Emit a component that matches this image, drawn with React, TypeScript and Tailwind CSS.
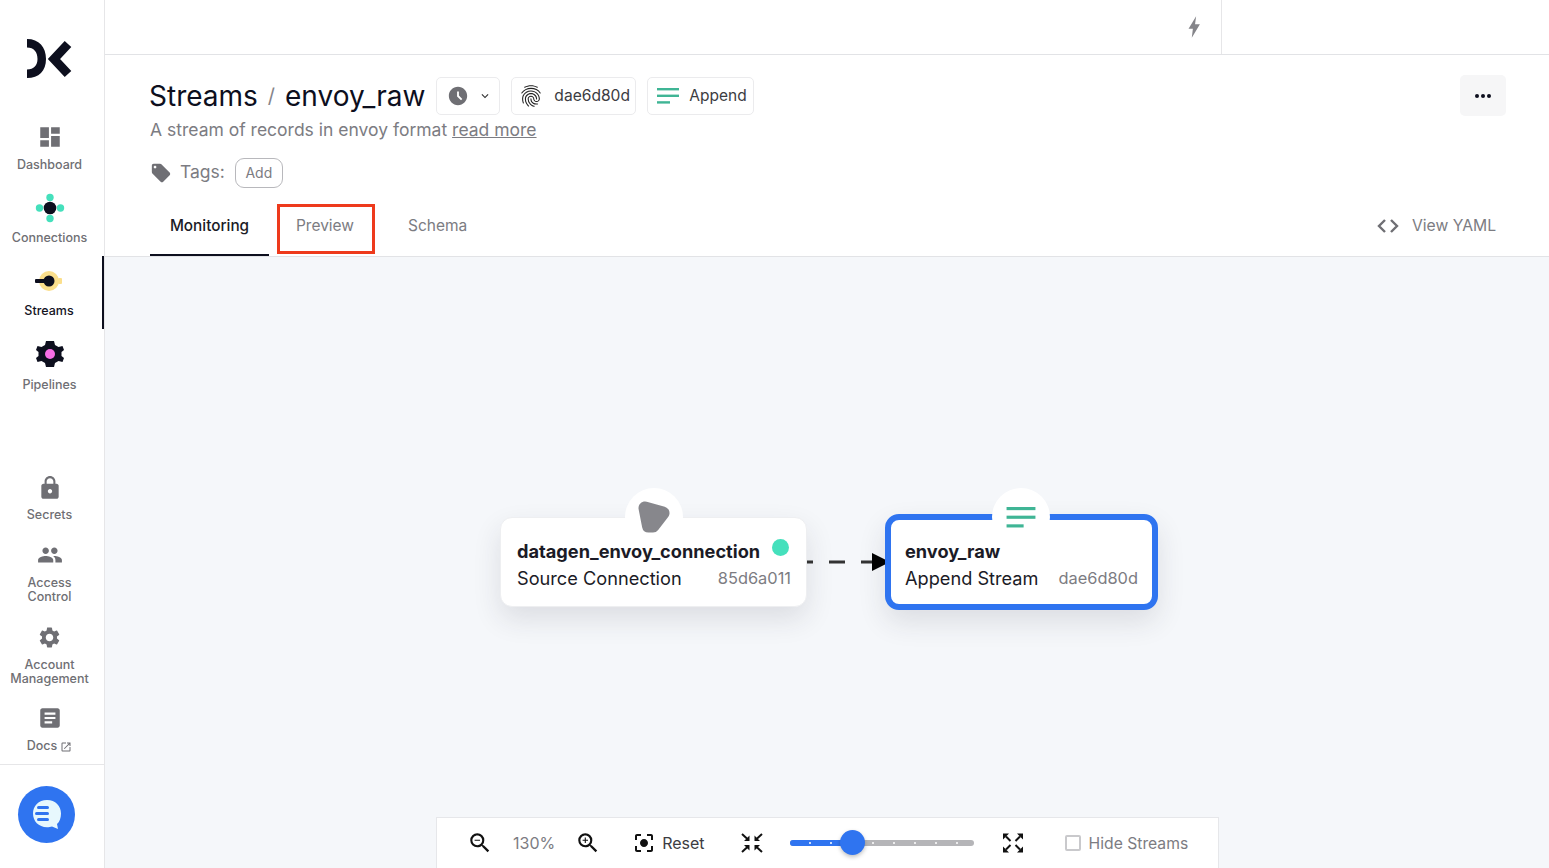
import {
  MdAccessTimeFilled,
  MdArticle,
  MdCenterFocusStrong,
  MdDashboard,
  MdFingerprint,
  MdKeyboardArrowDown,
  MdLocalOffer,
  MdLock,
  MdOpenInNew,
  MdPeople,
  MdSettings,
  MdZoomIn,
  MdZoomOut,
} from "react-icons/md";

const Logo = () => (
  <svg width="46" height="40" viewBox="0 0 46 40" fill="none">
    <path d="M0 0 C12 0 19 8 19 20 C19 32 12 39 0 39 L0 30.5 C7 30.5 10.5 26 10.5 20 C10.5 13 7 8.5 0 8.5 Z" fill="#0d0f1e" />
    <path d="M41 5 L27 20 L41 35" stroke="#0d0f1e" strokeWidth="9" />
  </svg>
);

const ConnectionsIcon = () => (
  <svg width="30" height="30" viewBox="0 0 30 30">
    <circle cx="15" cy="4.5" r="3.7" fill="#45e0bc" />
    <circle cx="15" cy="25.5" r="3.7" fill="#45e0bc" />
    <circle cx="4.5" cy="15" r="3.7" fill="#45e0bc" />
    <circle cx="25.5" cy="15" r="3.7" fill="#45e0bc" />
    <circle cx="15" cy="15" r="6.3" fill="#0d0f1e" />
  </svg>
);

const StreamsIcon = () => (
  <svg width="30" height="24" viewBox="0 0 30 24">
    <circle cx="15" cy="12" r="10" fill="#fbdf8c" />
    <rect x="24" y="9" width="4" height="6" rx="1" fill="#fbdf8c" />
    <rect x="1" y="10" width="14" height="4" rx="1" fill="#0d0f1e" />
    <circle cx="15" cy="12" r="5.5" fill="#0d0f1e" />
  </svg>
);

const PipelinesIcon = () => (
  <svg width="30" height="30" viewBox="0 0 30 30">
    <path
      d="M11 2 h8 l1 4 l3.5 2 l4 -1 l1.5 4 l-2.5 2 v4 l2.5 2 l-1.5 4 l-4 -1 l-3.5 2 l-1 4 h-8 l-1 -4 l-3.5 -2 l-4 1 l-1.5 -4 l2.5 -2 v-4 l-2.5 -2 l1.5 -4 l4 1 l3.5 -2 Z"
      fill="#0d0f1e"
    />
    <circle cx="15" cy="15" r="5" fill="#f76ee6" />
  </svg>
);

const StreamLines = ({ w = 22, h = 16 }: { w?: number; h?: number }) => (
  <svg width={w} height={h} viewBox="0 0 22 16">
    <rect x="0" y="0" width="22" height="2.4" fill="#3fb595" />
    <rect x="0" y="6.6" width="22" height="2.4" fill="#3fb595" />
    <rect x="0" y="13.2" width="13" height="2.4" fill="#3fb595" />
  </svg>
);

const Bolt = () => (
  <svg width="13" height="22" viewBox="0 0 12 20">
    <path d="M7.5 0 L0.5 11.5 H4.5 L3.5 20 L11 7.5 H6.5 Z" fill="#85858a" />
  </svg>
);

const ArrowsIn = () => (
  <svg width="22" height="20" viewBox="0 0 22 20" fill="#111">
    <path d="M1 1 L7 6.5 M21 1 L15 6.5 M1 19 L7 13.5 M21 19 L15 13.5" stroke="#111" strokeWidth="2" />
    <path d="M8.5 8 V2.5 L3 8 Z M13.5 8 V2.5 L19 8 Z M8.5 12 V17.5 L3 12 Z M13.5 12 V17.5 L19 12 Z" />
  </svg>
);

const ArrowsOut = () => (
  <svg width="22" height="20" viewBox="0 0 22 20" fill="#111">
    <path d="M4 3.5 L8.5 8 M18 3.5 L13.5 8 M4 16.5 L8.5 12 M18 16.5 L13.5 12" stroke="#111" strokeWidth="2" />
    <path d="M1 0.5 H7 L1 6.5 Z M21 0.5 H15 L21 6.5 Z M1 19.5 H7 L1 13.5 Z M21 19.5 H15 L21 13.5 Z" />
  </svg>
);

const NavItem = ({
  label,
  icon,
  active,
  className,
}: {
  label: React.ReactNode;
  icon: React.ReactNode;
  active?: boolean;
  className: string;
}) => (
  <div className={`relative flex flex-col items-center text-center text-[12.5px] leading-[14px] font-medium ${active ? "text-[#14141f]" : "text-[#6f6f74]"} ${className}`}>
    {icon}
    {label}
    {active && <div className="absolute top-0 right-0 bottom-0 w-[2px] bg-[#0d0f1e]" />}
  </div>
);

const Sidebar = () => (
  <aside className="flex w-[105px] shrink-0 flex-col border-r border-[#e6e6e8] bg-white">
    <div className="flex h-[110px] items-start justify-center pt-[39px] pr-[4px]">
      <Logo />
    </div>
    <NavItem className="h-[73px] pt-[14px] gap-[8px] pr-[5px]" label="Dashboard" icon={<MdDashboard size={26} className="text-[#6f6f74]" />} />
    <NavItem className="h-[73px] pt-[10px] gap-[8px] pr-[5px]" label="Connections" icon={<ConnectionsIcon />} />
    <NavItem active className="h-[73px] pt-[13px] gap-[11px] pr-[6px]" label="Streams" icon={<StreamsIcon />} />
    <NavItem className="h-[73px] pt-[10px] gap-[9px] pr-[5px]" label="Pipelines" icon={<PipelinesIcon />} />
    <div className="flex flex-1 flex-col justify-end">
      <NavItem className="h-[68px] pt-[6px] gap-[7px] pr-[5px]" label="Secrets" icon={<MdLock size={26} className="text-[#6f6f74]" />} />
      <NavItem className="h-[83px] pt-[5px] gap-[8px] pr-[5px]" label={<>Access<br />Control</>} icon={<MdPeople size={26} className="text-[#6f6f74]" />} />
      <NavItem className="h-[82px] pt-[5px] gap-[8px] pr-[5px]" label={<>Account<br />Management</>} icon={<MdSettings size={25} className="text-[#6f6f74]" />} />
      <NavItem
        className="h-[62px] pt-[3px] gap-[8px] pr-[5px]"
        label={<span className="flex items-center gap-[3px]">Docs <MdOpenInNew size={12} className="mt-[2px]" /></span>}
        icon={<MdArticle size={26} className="text-[#6f6f74]" />}
      />
    </div>
    <div className="flex h-[104px] items-start border-t border-[#e6e6e8] pt-[21px] pl-[18px]">
      <div className="flex h-[57px] w-[57px] items-center justify-center rounded-full bg-[#2f74f0]">
        <svg width="30" height="34" viewBox="0 0 30 32">
          <path d="M15 1 C23.5 1 29 7 29 14.5 C29 19 27.5 23 25 25 L26 30 L20 27.5 C18.5 28 17 28.2 15 28.2 C6.5 28.2 1 22 1 14.5 C1 7 6.5 1 15 1 Z" fill="#e7f8fd" />
          <rect x="5" y="7" width="12" height="3" rx="1.5" fill="#2f74f0" />
          <rect x="3" y="13" width="14" height="3" rx="1.5" fill="#2f74f0" />
          <rect x="5" y="19" width="12" height="3" rx="1.5" fill="#2f74f0" />
        </svg>
      </div>
    </div>
  </aside>
);

const Chip = ({ children, className }: { children: React.ReactNode; className: string }) => (
  <div className={`flex h-[38px] items-center rounded-[5px] border border-[#ebebed] bg-white ${className}`}>{children}</div>
);

const Header = () => (
  <div className="flex h-[202px] shrink-0 flex-col border-b border-[#e2e3e6] bg-white pl-[45px] pr-[43px]">
    <div className="flex items-start justify-between pt-[20px]">
      <div className="-mt-[1px] -ml-[1px]">
        <div className="flex items-center">
          <span className="text-[28px] leading-[44px] text-[#0d0f1e]">Streams</span>
          <span className="ml-[10px] text-[20px] text-[#85858a]">/</span>
          <span className="ml-[10px] text-[28px] leading-[44px] text-[#0d0f1e]">envoy_raw</span>
          <Chip className="ml-[11px] w-[64px] pl-[10px] gap-[9px] text-[#6f6f74]">
            <MdAccessTimeFilled size={22} />
            <MdKeyboardArrowDown size={14} className="text-[#333]" />
          </Chip>
          <Chip className="ml-[11px] w-[125px] pl-[6px] gap-[10px]">
            <MdFingerprint size={26} className="text-[#222]" />
            <span className="text-[15.6px] text-[#3c3c42]">dae6d80d</span>
          </Chip>
          <Chip className="ml-[11px] w-[107px] pl-[9px] gap-[10px]">
            <StreamLines />
            <span className="text-[15.5px] text-[#3c3c42]">Append</span>
          </Chip>
        </div>
        <div className="ml-[1px] text-[17.5px] leading-[24px] text-[#7c7c82]">
          A stream of records in envoy format <span className="underline">read more</span>
        </div>
        <div className="mt-[16px] ml-[1px] flex items-center">
          <MdLocalOffer size={22} className="text-[#6f6f74]" />
          <span className="-mt-[2px] ml-[8px] text-[17.5px] text-[#7c7c82]">Tags:</span>
          <span className="ml-[10px] flex h-[30px] w-[48px] items-center justify-center rounded-[9px] border border-[#b8b8bc] pb-[1px] text-[14px] text-[#7c7c82]">Add</span>
        </div>
      </div>
      <div className="flex h-[41px] w-[46px] items-center justify-center gap-[2px] rounded-[5px] bg-[#f6f6f7]">
        <span className="h-[4px] w-[4px] rounded-full bg-[#0d0f1e]" />
        <span className="h-[4px] w-[4px] rounded-full bg-[#0d0f1e]" />
        <span className="h-[4px] w-[4px] rounded-full bg-[#0d0f1e]" />
      </div>
    </div>
    <div className="mt-auto flex h-[61px] items-stretch text-[15.5px]">
      <div className="flex w-[119px] items-center justify-center border-b-2 border-[#0d0f1e] pt-[3px] text-[15.3px] font-medium text-[#1b1b26]">Monitoring</div>
      <div className="relative ml-[8px] flex w-[98px] items-center justify-center pt-[1px] pr-[2px] text-[#7c7c82]">
        Preview
        <div className="absolute top-[9px] right-0 bottom-[2px] left-0 border-[3px] border-[#ee3a1c]" />
      </div>
      <div className="ml-[33px] flex items-center pt-[1px] text-[#7c7c82]">Schema</div>
      <div className="ml-auto flex items-center pt-[1px] pr-[10px] text-[#7c7c82]">
        <svg width="22" height="14" viewBox="0 0 22 14" fill="none" stroke="#6f6f74" strokeWidth="2.4">
          <path d="M8 1 L2 7 L8 13 M14 1 L20 7 L14 13" />
        </svg>
        <span className="ml-[13px] text-[15.7px]">View YAML</span>
      </div>
    </div>
  </div>
);

const Toolbar = () => (
  <div className="absolute bottom-0 left-[331px] flex h-[51px] w-[783px] items-center border border-b-0 border-[#e6e7ea] bg-white pl-[30px] text-[#7c7c82]">
    <MdZoomOut size={26} className="text-[#111]" />
    <span className="ml-[20px] text-[16px]">130%</span>
    <MdZoomIn size={26} className="ml-[20px] text-[#111]" />
    <MdCenterFocusStrong size={24} className="ml-[31px] text-[#111]" />
    <span className="ml-[6px] text-[16px] text-[#3c3c42]">Reset</span>
    <div className="ml-[36px]"><ArrowsIn /></div>
    <div className="relative ml-[27px] h-[6px] w-[184px] rounded-full bg-[#b5b5b8]">
      <div className="absolute inset-y-0 left-0 w-[60px] rounded-full bg-[#2f74f0]" />
      <div className="absolute top-[2px] left-[19px] h-[2px] w-[2px] rounded-full bg-white" />
      <div className="absolute top-[2px] left-[40px] h-[2px] w-[2px] rounded-full bg-white" />
      <div className="absolute top-[2px] left-[82px] h-[2px] w-[2px] rounded-full bg-white" />
      <div className="absolute top-[2px] left-[103px] h-[2px] w-[2px] rounded-full bg-white" />
      <div className="absolute top-[2px] left-[124px] h-[2px] w-[2px] rounded-full bg-white" />
      <div className="absolute top-[2px] left-[145px] h-[2px] w-[2px] rounded-full bg-white" />
      <div className="absolute top-[2px] left-[166px] h-[2px] w-[2px] rounded-full bg-white" />
      <div className="absolute top-[-10px] left-[50px] h-[25px] w-[25px] rounded-full bg-[#2f74f0] shadow-[0_2px_4px_rgba(0,0,0,0.25)]" />
    </div>
    <div className="ml-[28px]"><ArrowsOut /></div>
    <span className="ml-[41px] h-[16px] w-[16px] rounded-[2px] border-2 border-[#c9c9cc]" />
    <span className="ml-[8px] pt-[1px] text-[15.7px]">Hide Streams</span>
  </div>
);

const Canvas = () => (
  <div className="relative flex-1 overflow-hidden bg-[#f5f7fa]">
    {/* source node */}
    <div className="absolute top-[260px] left-[395px] h-[90px] w-[307px] rounded-[12px] border border-[#eeeff1] bg-white pt-[21px] pl-[16px] pr-[15px] shadow-[0_12px_28px_rgba(40,40,60,0.12)]">
      <div className="absolute top-[-30px] left-[124px] flex h-[58px] w-[58px] items-center justify-center rounded-full bg-white">
        <svg width="34" height="34" viewBox="0 0 34 34">
          <path d="M8 8 L26 13 L16 26 L11.5 26 Z" fill="#87878c" stroke="#87878c" strokeWidth="13" strokeLinejoin="round" />
        </svg>
      </div>
      <div className="flex items-start justify-between">
        <span className="text-[18.2px] leading-[24px] font-bold text-[#1b1b26]">datagen_envoy_connection</span>
        <span className="mr-[2px] h-[17px] w-[17px] rounded-full bg-[#45e0bc]" />
      </div>
      <div className="mt-[3px] flex items-center justify-between">
        <span className="text-[18.2px] leading-[24px] text-[#1b1b26]">Source Connection</span>
        <span className="text-[16.4px] text-[#7c7c82]">85d6a011</span>
      </div>
    </div>

    {/* dashed edge */}
    <svg className="absolute top-[295px] left-[702px]" width="84" height="20" viewBox="0 0 84 20">
      <path d="M0 10 H65" stroke="#333" strokeWidth="3" strokeDasharray="16 16" strokeDashoffset="10" />
      <path d="M65 1 L83 10 L65 19 Z" fill="#000" />
    </svg>

    {/* stream node */}
    <div className="absolute top-[257px] left-[780px] h-[96px] w-[273px] rounded-[14px] border-[6px] border-[#2f74f0] bg-white pt-[19px] pl-[14px] pr-[14px] shadow-[0_12px_28px_rgba(40,40,60,0.12)]">
      <div className="absolute top-[-32px] left-[101px] flex h-[58px] w-[58px] items-center justify-center rounded-full bg-white">
        <StreamLines w={30} h={21} />
      </div>
      <div className="relative text-[18.2px] leading-[24px] font-bold text-[#1b1b26]">envoy_raw</div>
      <div className="mt-[3px] flex items-center justify-between">
        <span className="text-[18.2px] leading-[24px] text-[#1b1b26]">Append Stream</span>
        <span className="text-[16.4px] text-[#7c7c82]">dae6d80d</span>
      </div>
    </div>

    <Toolbar />
  </div>
);

export default function App() {
  return (
    <div className="flex h-[868px] w-[1549px] overflow-hidden bg-white font-['Inter',sans-serif]">
      <Sidebar />
      <main className="flex min-w-0 flex-1 flex-col">
        <div className="flex h-[55px] shrink-0 items-center justify-end border-b border-[#e2e3e6] bg-white">
          <div className="mr-[20px]"><Bolt /></div>
          <div className="h-full w-[328px] border-l border-[#e6e6e8]" />
        </div>
        <Header />
        <Canvas />
      </main>
    </div>
  );
}
